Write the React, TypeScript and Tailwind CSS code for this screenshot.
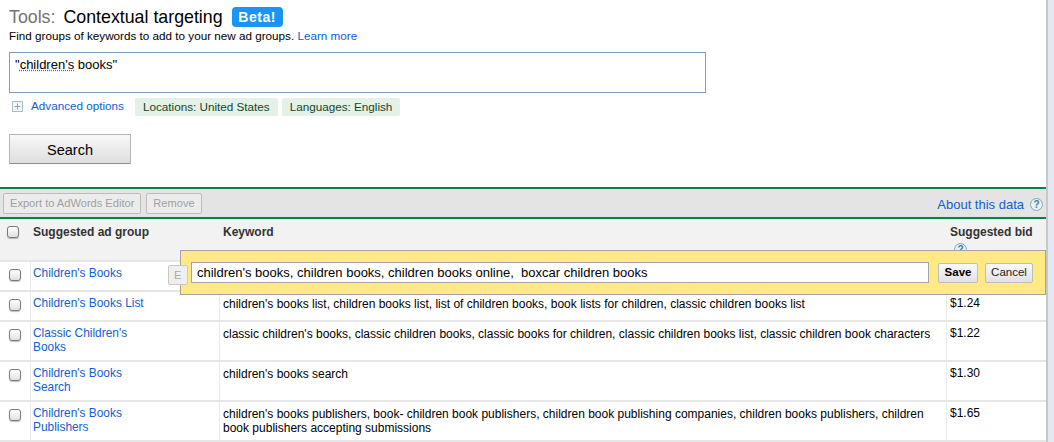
import type { ReactNode } from 'react'

const rows = [
  {
    group: ["Children's Books"],
    keywords: '',
    bid: '',
    height: 'h-[30px]',
  },
  {
    group: ["Children's Books List"],
    keywords:
      "children's books list, children books list, list of children books, book lists for children, classic children books list",
    bid: '$1.24',
    height: 'h-[30px]',
  },
  {
    group: ["Classic Children's", 'Books'],
    keywords:
      "classic children's books, classic children books, classic books for children, classic children books list, classic children book characters",
    bid: '$1.22',
    height: 'h-[40px]',
  },
  {
    group: ["Children's Books", 'Search'],
    keywords: "children's books search",
    bid: '$1.30',
    height: 'h-[40px]',
  },
  {
    group: ["Children's Books", 'Publishers'],
    keywords:
      "children's books publishers, book- children book publishers, children book publishing companies, children books publishers, children book publishers accepting submissions",
    bid: '$1.65',
    height: 'h-[42px] border-b-2',
  },
]

function Checkbox() {
  return (
    <span className="block h-[12px] w-[12px] rounded-[3px] border border-[#7a7a7a] bg-gradient-to-b from-white to-[#e0e0e0] shadow-[0_1px_1px_rgba(0,0,0,0.25)]" />
  )
}

function HelpIcon() {
  return (
    <span className="flex h-[13px] w-[13px] items-center justify-center rounded-full border border-[#7fa9b8] bg-[#e6f1f5] text-[10px] font-bold leading-none text-[#3f7f9c]">
      ?
    </span>
  )
}

function Chip({ children }: { children: ReactNode }) {
  return (
    <span className="flex h-[18px] items-center rounded-[2px] bg-[#e4f1e8] px-[8px] text-[11.7px] text-[#174526]">
      {children}
    </span>
  )
}

function ToolbarButton({ children }: { children: ReactNode }) {
  return (
    <span className="flex h-[21px] items-center rounded-[2px] border border-[#bdbdbd] bg-[#ececec] px-[6px] pt-[1px] text-[11.1px] text-[#a0a0a0]">
      {children}
    </span>
  )
}

export default function App() {
  return (
    <div className="relative flex h-[442px] w-[1054px] overflow-hidden bg-white font-['Liberation_Sans',Arial,sans-serif] text-[12px] text-black">
      <div className="w-[1046px] shrink-0">
        {/* Search form */}
        <div className="px-[9px] pt-[5px]">
          <div className="flex h-[24px] items-center">
            <span className="text-[17.8px] text-[#77726d]">Tools:</span>
            <span className="ml-[8px] text-[17.8px] text-black">Contextual targeting</span>
            <span className="ml-[9px] flex h-[20px] w-[51px] items-center justify-center rounded-[4px] bg-[#1a95f5] text-[14px] font-bold tracking-[0.5px] text-white">
              Beta!
            </span>
          </div>
          <p className="mt-[-2px] text-[11.7px] leading-[18px]">
            Find groups of keywords to add to your new ad groups.{' '}
            <span className="text-[#1160d0]">Learn more</span>
          </p>
          <div className="mt-[7px] h-[41px] w-[697px] border border-[#7f9db9] px-[5px] py-[3px] text-[13px] leading-[18px]">
            "<span className="underline decoration-[#d33] decoration-dotted">children's</span> books"
          </div>
          <div className="mt-[5px] flex h-[18px] items-center">
            <svg className="ml-[3px] mt-[-2px]" width="11" height="11" viewBox="0 0 11 11" fill="none">
              <rect x="0.5" y="0.5" width="10" height="10" fill="#f4f8f9" stroke="#a9bfc6" />
              <path d="M5.5 2.5v6M2.5 5.5h6" stroke="#8aa6af" />
            </svg>
            <span className="ml-[8px] mt-[-2px] w-[104px] text-[11.7px] text-[#1160d0]">Advanced options</span>
            <Chip>Locations: United States</Chip>
            <span className="ml-[4px]">
              <Chip>Languages: English</Chip>
            </span>
          </div>
          <button className="mt-[18px] block h-[30px] w-[122px] border border-[#b5b5b5] border-b-[#8f8f8f] bg-gradient-to-b from-[#f8f8f8] to-[#dedede] pt-[3px] text-[14.5px] text-black">
            Search
          </button>
        </div>

        {/* Results */}
        <div className="mt-[23px] border-t-2 border-[#0b8043]">
          <div className="flex h-[30px] items-center justify-between border-b-2 border-[#0b8043] bg-[#e4e4e4] pl-[3px] pr-[3px]">
            <div className="flex gap-[5px]">
              <ToolbarButton>Export to AdWords Editor</ToolbarButton>
              <ToolbarButton>Remove</ToolbarButton>
            </div>
            <div className="flex items-center gap-[6px] pt-[3px] text-[13px] text-[#1160d0]">
              About this data
              <HelpIcon />
            </div>
          </div>

          <div className="flex h-[41px] bg-[#f2f2f2] text-[12px] font-bold text-[#333]">
            <div className="w-[30px] pl-[7px] pt-[7px]">
              <Checkbox />
            </div>
            <div className="w-[190px] pl-[3px] pt-[4px]">Suggested ad group</div>
            <div className="w-[726px] pl-[3px] pt-[4px]">Keyword</div>
            <div className="flex-1 pl-[4px] pt-[4px]">
              Suggested bid
              <div className="ml-[4px] mt-[2px]">
                <HelpIcon />
              </div>
            </div>
          </div>

          {rows.map((row, i) => (
            <div key={i} className={`flex ${row.height} border-t-2 border-[#e6e6e6] leading-[14px]`}>
              <div className="w-[31px] shrink-0 border-r border-[#ebebeb] pl-[9px] pt-[7px]">
                <Checkbox />
              </div>
              <div className="w-[189px] shrink-0 border-r border-[#ebebeb] pl-[2px] pt-[4px] text-[11.9px] text-[#1160d0]">
                {row.group.map((line) => (
                  <div key={line}>{line}</div>
                ))}
              </div>
              <div className="w-[727px] shrink-0 border-r border-[#ebebeb] pl-[3px] pr-[3px] pt-[5px] text-[12px]">
                {row.keywords}
              </div>
              <div className="flex-1 pl-[3px] pt-[4px]">{row.bid}</div>
            </div>
          ))}
        </div>
      </div>

      {/* Window edge on the right */}
      <div className="flex-1 border-l-2 border-[#c8c8c8] bg-[#e4e8f0]" />

      {/* Inline keyword editor, over the first row */}
      <div className="absolute left-[180px] top-[250px] flex h-[45px] w-[866px] items-center border border-[#a3a3a3] bg-[#ffe985] pl-[10px]">
        <div className="flex h-[21px] w-[738px] items-center border border-[#a3a3a3] bg-white px-[5px] text-[13px] whitespace-pre">
          children's books, children books, children books online,  boxcar children books
        </div>
        <button className="ml-[9px] h-[20px] w-[40px] rounded-[2px] border border-[#bdbdbd] bg-gradient-to-b from-[#fafafa] to-[#e2e2e2] text-[11.5px] font-bold">
          Save
        </button>
        <button className="ml-[7px] h-[20px] w-[48px] rounded-[2px] border border-[#bdbdbd] bg-gradient-to-b from-[#fafafa] to-[#e2e2e2] text-[11.5px] text-[#222]">
          Cancel
        </button>
      </div>
      {/* Edit button peeking out from under the editor */}
      <span className="absolute left-[168px] top-[265px] flex h-[20px] w-[20px] items-center rounded-[2px] border border-[#c8c8c8] bg-[#efefef] pl-[5px] text-[11px] text-[#aaa]">
        E
      </span>
    </div>
  )
}
